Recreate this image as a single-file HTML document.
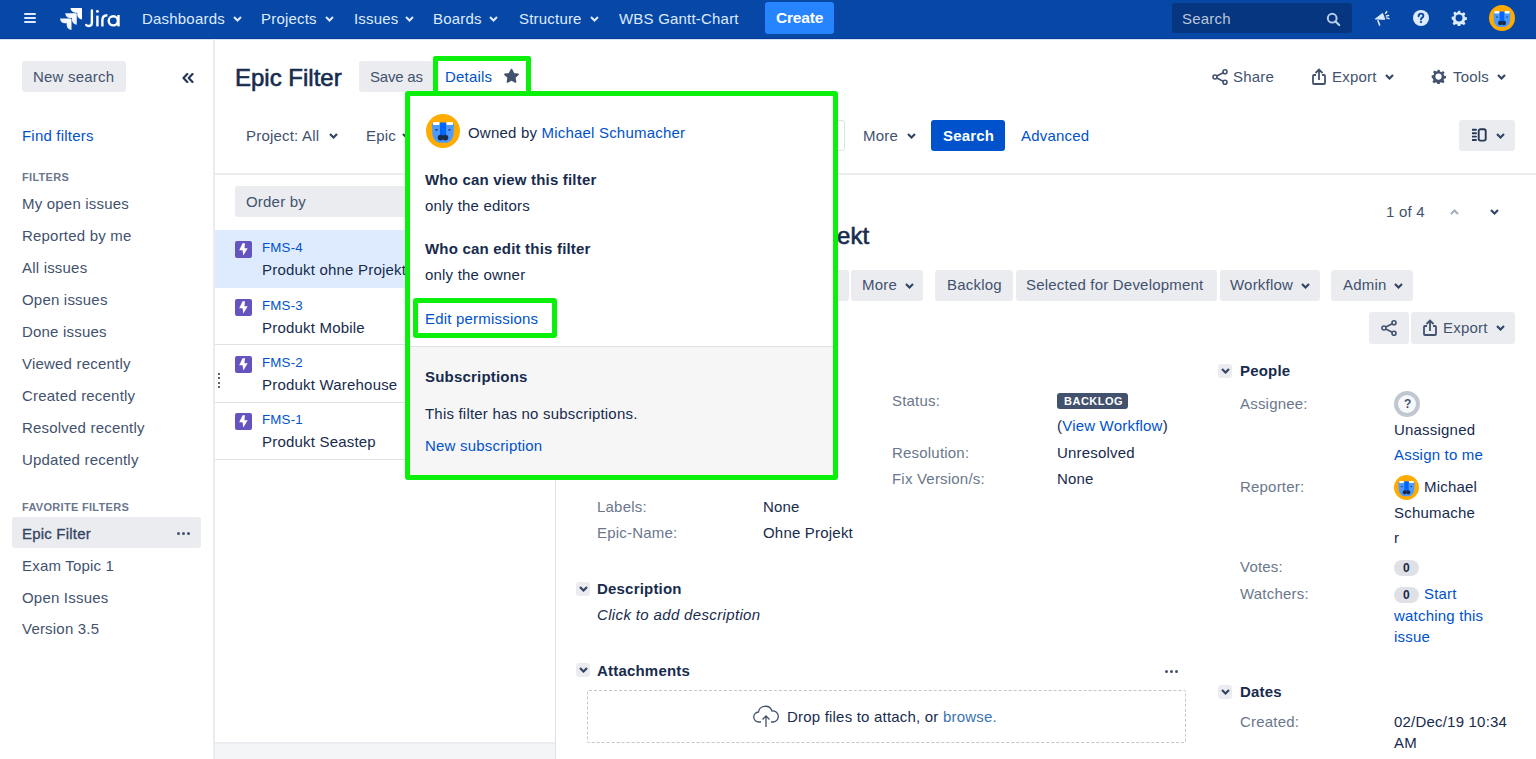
<!DOCTYPE html>
<html><head><meta charset="utf-8">
<style>
*{box-sizing:border-box;margin:0;padding:0}
html,body{width:1536px;height:759px;overflow:hidden;background:#fff;font-family:"Liberation Sans",sans-serif;color:#172B4D}
.a{position:absolute}
.t{position:absolute;white-space:nowrap;font-size:15px;line-height:20px;letter-spacing:0.2px}
.s{color:#42526E}
.lbl{color:#6B778C}
.lnk{color:#0052CC}
.b{font-weight:bold}
.med{-webkit-text-stroke:0.35px currentColor}
.btn{position:absolute;background:#EBECF0;border-radius:3px}
.chev{position:absolute;width:9px;height:6px}
#nav{position:absolute;left:0;top:0;width:1536px;height:39px;background:#0747A6}
#nav .t{color:#DEEBFF;top:9px}
</style></head><body>

<!-- NAV -->
<div id="nav">
  <div class="a" style="left:0;top:38px;width:1536px;height:1px;background:#083C96"></div>
  <div class="a" style="left:24px;top:13px;width:12px;height:2px;background:#DEEBFF;border-radius:1px"></div>
  <div class="a" style="left:24px;top:17px;width:12px;height:2px;background:#DEEBFF;border-radius:1px"></div>
  <div class="a" style="left:24px;top:21px;width:12px;height:2px;background:#DEEBFF;border-radius:1px"></div>
  <svg class="a" style="left:60px;top:8px" width="22" height="22" viewBox="1.5 2 27.2 27.2">
    <defs><linearGradient id="lg" x1="1" y1="0" x2="0" y2="1"><stop offset="0.2" stop-color="#fff"/><stop offset="1" stop-color="#C9D8F5"/></linearGradient></defs>
    <path d="M27.6 2 H14.5 a5.9 5.9 0 0 0 5.9 5.9 h2.4 v2.3 a5.9 5.9 0 0 0 5.9 5.9 V3 a1 1 0 0 0-1-1z" fill="#fff"/>
    <path d="M21.1 8.5 H8 a5.9 5.9 0 0 0 5.9 5.9 h2.4 v2.3 a5.9 5.9 0 0 0 5.9 5.9 V9.5 a1 1 0 0 0-1-1z" fill="url(#lg)"/>
    <path d="M14.6 15 H1.5 a5.9 5.9 0 0 0 5.9 5.9 h2.4 v2.3 a5.9 5.9 0 0 0 5.9 5.9 V16 a1 1 0 0 0-1-1z" fill="url(#lg)"/>
  </svg>
  <svg class="a" style="left:84px;top:8px" width="40" height="22" viewBox="84 8 40 22">
    <path d="M91.9 10.4 V22.6 Q91.9 26 88.8 26 Q87 26 86.2 25" fill="none" stroke="#fff" stroke-width="2.4" stroke-linecap="round"/>
    <path d="M97.4 15.6 V26.4" stroke="#fff" stroke-width="2.4"/>
    <circle cx="97.4" cy="11.4" r="1.45" fill="#fff"/>
    <path d="M102.4 26.4 V20 Q102.4 15.2 107.4 15.2" fill="none" stroke="#fff" stroke-width="2.4"/>
    <circle cx="113.3" cy="20.8" r="4.6" fill="none" stroke="#fff" stroke-width="2.4"/>
    <path d="M118.5 15 V26.4" stroke="#fff" stroke-width="2.4"/>
  </svg>
  <div class="t" style="left:142px">Dashboards</div>
  <div class="t" style="left:261px">Projects</div>
  <div class="t" style="left:354px">Issues</div>
  <div class="t" style="left:433px">Boards</div>
  <div class="t" style="left:519px">Structure</div>
  <div class="t" style="left:619px">WBS Gantt-Chart</div>
  <svg class="chev" style="left:233px;top:15.5px" viewBox="0 0 9 6"><path d="M1 1 L4.5 4.5 L8 1" stroke="#DEEBFF" stroke-width="2" fill="none"/></svg>
  <svg class="chev" style="left:325px;top:15.5px" viewBox="0 0 9 6"><path d="M1 1 L4.5 4.5 L8 1" stroke="#DEEBFF" stroke-width="2" fill="none"/></svg>
  <svg class="chev" style="left:405px;top:15.5px" viewBox="0 0 9 6"><path d="M1 1 L4.5 4.5 L8 1" stroke="#DEEBFF" stroke-width="2" fill="none"/></svg>
  <svg class="chev" style="left:489px;top:15.5px" viewBox="0 0 9 6"><path d="M1 1 L4.5 4.5 L8 1" stroke="#DEEBFF" stroke-width="2" fill="none"/></svg>
  <svg class="chev" style="left:590px;top:15.5px" viewBox="0 0 9 6"><path d="M1 1 L4.5 4.5 L8 1" stroke="#DEEBFF" stroke-width="2" fill="none"/></svg>
  <div class="a" style="left:765px;top:2px;width:69px;height:31.7px;background:#2684FF;border-radius:3px"></div>
  <div class="t b" style="left:776px;top:8px;font-size:15.5px;letter-spacing:-0.2px;color:#fff">Create</div>
  <div class="a" style="left:1172px;top:2.6px;width:180px;height:30.7px;background:#06367F;border-radius:3px"></div>
  <div class="t" style="left:1182px;color:#B9C6DA">Search</div>
</div>

<div class="a" style="left:0;top:39px;width:1536px;height:1px;background:#D5E2F5"></div>
<!-- SIDEBAR -->
<div class="a" style="left:213px;top:39px;width:2px;height:720px;background:#EBECF0"></div>
<div class="btn" style="left:22px;top:61px;width:104px;height:31px"></div>
<div class="t s" style="left:33px;top:67px">New search</div>
<svg class="a" style="left:182px;top:73px" width="12" height="10" viewBox="0 0 12 10"><path d="M5.3 1 L1.5 5 L5.3 9 M10.5 1 L6.7 5 L10.5 9" fill="none" stroke="#253858" stroke-width="2.2" stroke-linejoin="round" stroke-linecap="round"/></svg>
<div class="t lnk" style="left:22px;top:126px">Find filters</div>
<div class="t b lbl" style="left:22px;top:170px;font-size:11px;line-height:14px;letter-spacing:0.3px">FILTERS</div>
<div class="t s" style="left:22px;top:194px">My open issues</div>
<div class="t s" style="left:22px;top:226px">Reported by me</div>
<div class="t s" style="left:22px;top:258px">All issues</div>
<div class="t s" style="left:22px;top:290px">Open issues</div>
<div class="t s" style="left:22px;top:322px">Done issues</div>
<div class="t s" style="left:22px;top:354px">Viewed recently</div>
<div class="t s" style="left:22px;top:386px">Created recently</div>
<div class="t s" style="left:22px;top:418px">Resolved recently</div>
<div class="t s" style="left:22px;top:450px">Updated recently</div>
<div class="t b lbl" style="left:22px;top:500px;font-size:11px;line-height:14px;letter-spacing:0.3px">FAVORITE FILTERS</div>
<div class="btn" style="left:12px;top:517px;width:189px;height:31px"></div>
<div class="t" style="left:22px;top:524px;color:#344563;-webkit-text-stroke:0.3px #344563">Epic Filter</div>
<div class="t s" style="left:22px;top:556px">Exam Topic 1</div>
<div class="t s" style="left:22px;top:588px">Open Issues</div>
<div class="t s" style="left:22px;top:619px">Version 3.5</div>


<!-- MAIN HEADER -->
<div class="t" style="left:235px;top:64px;font-size:24px;line-height:28px;letter-spacing:0;-webkit-text-stroke:0.6px #172B4D">Epic Filter</div>
<div class="btn" style="left:359px;top:61px;width:74px;height:31px"></div>
<div class="t s" style="left:370px;top:67px;letter-spacing:-0.2px">Save as</div>
<div class="t lnk" style="left:445px;top:67px">Details</div>
<svg class="a" style="left:503px;top:68px" width="17" height="16" viewBox="0 0 24 23"><path d="M12 2.2l2.9 6 6.5.9-4.7 4.5 1.1 6.5L12 17l-5.8 3.1 1.1-6.5-4.7-4.5 6.5-.9z" fill="#42526E" stroke="#42526E" stroke-width="2.4" stroke-linejoin="round"/></svg>

<svg class="a" style="left:1212px;top:69px" width="16" height="16" viewBox="0 0 16 16"><circle cx="3" cy="8" r="2" fill="none" stroke="#42526E" stroke-width="1.6"/><circle cx="13" cy="2.8" r="2" fill="none" stroke="#42526E" stroke-width="1.6"/><circle cx="13" cy="13.2" r="2" fill="none" stroke="#42526E" stroke-width="1.6"/><path d="M4.8 7 L11.2 3.8 M4.8 9 L11.2 12.2" stroke="#42526E" stroke-width="1.6"/></svg>
<div class="t s" style="left:1233px;top:67px">Share</div>
<svg class="a" style="left:1312px;top:68px" width="14" height="17" viewBox="0 0 14 17"><path d="M4 7 H2 a1 1 0 0 0 -1 1 V15 a1 1 0 0 0 1 1 H12 a1 1 0 0 0 1 -1 V8 a1 1 0 0 0 -1 -1 H10" fill="none" stroke="#42526E" stroke-width="1.8"/><path d="M7 12 V1.5 M3.5 5 L7 1.5 L10.5 5" fill="none" stroke="#42526E" stroke-width="1.8"/></svg>
<div class="t s" style="left:1332px;top:67px">Export</div>
<svg class="chev" style="left:1385px;top:74px" viewBox="0 0 9 6"><path d="M1 1 L4.5 4.5 L8 1" stroke="#344563" stroke-width="2.2" fill="none"/></svg>
<svg class="a" style="left:1431px;top:69px" width="15" height="15" viewBox="0 0 24 24"><path d="M10.3 1h3.4l.7 3.1a8.3 8.3 0 0 1 2.2.9l2.7-1.7 2.4 2.4-1.7 2.7a8.3 8.3 0 0 1 .9 2.2l3.1.7v3.4l-3.1.7a8.3 8.3 0 0 1-.9 2.2l1.7 2.7-2.4 2.4-2.7-1.7a8.3 8.3 0 0 1-2.2.9l-.7 3.1h-3.4l-.7-3.1a8.3 8.3 0 0 1-2.2-.9l-2.7 1.7-2.4-2.4 1.7-2.7a8.3 8.3 0 0 1-.9-2.2L1 13.7v-3.4l3.1-.7a8.3 8.3 0 0 1 .9-2.2L3.3 4.7l2.4-2.4 2.7 1.7a8.3 8.3 0 0 1 2.2-.9z" fill="#42526E"/><circle cx="12" cy="12" r="5" fill="#fff"/></svg>
<div class="t s" style="left:1453px;top:67px">Tools</div>
<svg class="chev" style="left:1497px;top:74px" viewBox="0 0 9 6"><path d="M1 1 L4.5 4.5 L8 1" stroke="#344563" stroke-width="2.2" fill="none"/></svg>

<!-- FILTER BAR -->
<div class="t s" style="left:246px;top:126px">Project: All</div>
<svg class="chev" style="left:329px;top:133px" viewBox="0 0 9 6"><path d="M1 1 L4.5 4.5 L8 1" stroke="#344563" stroke-width="2.2" fill="none"/></svg>
<div class="t s" style="left:366px;top:126px">Epic</div>
<svg class="chev" style="left:402px;top:133px" viewBox="0 0 9 6"><path d="M1 1 L4.5 4.5 L8 1" stroke="#344563" stroke-width="2.2" fill="none"/></svg>
<div class="a" style="left:640px;top:120px;width:205px;height:31px;border:1px solid #DFE1E6;border-radius:3px"></div>
<div class="t s" style="left:863px;top:126px">More</div>
<svg class="chev" style="left:907px;top:133px" viewBox="0 0 9 6"><path d="M1 1 L4.5 4.5 L8 1" stroke="#344563" stroke-width="2.2" fill="none"/></svg>
<div class="a" style="left:931px;top:120px;width:74px;height:31px;background:#0052CC;border-radius:3px"></div>
<div class="t b" style="left:943px;top:126px;color:#fff">Search</div>
<div class="t lnk" style="left:1021px;top:126px">Advanced</div>
<div class="btn" style="left:1459px;top:120px;width:56px;height:31px"></div>
<div class="a" style="left:215px;top:172.5px;width:1321px;height:2px;background:#EBECF0"></div>

<!-- ISSUE LIST -->
<div class="a" style="left:555px;top:175px;width:1px;height:584px;background:#DFE1E6"></div>
<div class="btn" style="left:235px;top:186px;width:300px;height:31px;background:#EBECF0"></div>
<div class="t s" style="left:246px;top:192px">Order by</div>
<div class="a" style="left:215px;top:230px;width:340px;height:58px;background:#DEEBFF"></div>
<div class="a" style="left:215px;top:344px;width:340px;height:1px;background:#DFE1E6"></div>
<div class="a" style="left:215px;top:402px;width:340px;height:1px;background:#DFE1E6"></div>
<div class="a" style="left:215px;top:459px;width:340px;height:1px;background:#DFE1E6"></div>
<div class="a" style="left:215px;top:742px;width:340px;height:17px;background:#F4F5F7;border-top:2px solid #EBECF0"></div>
<div class="a" style="left:235px;top:241px;width:17px;height:17px;background:#6554C0;border-radius:2px"><svg width="17" height="17" viewBox="0 0 17 17" style="position:absolute;left:0;top:0"><path d="M7.6 2.3 L4.2 9.2 H7.6 L8.3 14.4 L12.7 7.2 H9.4 L10 2.3 Z" fill="#fff"/></svg></div>
<div class="t lnk" style="left:262px;top:240px;font-size:13.3px;line-height:16px">FMS-4</div>
<div class="t" style="left:262px;top:260px">Produkt ohne Projekt</div>
<div class="a" style="left:235px;top:299px;width:17px;height:17px;background:#6554C0;border-radius:2px"><svg width="17" height="17" viewBox="0 0 17 17" style="position:absolute;left:0;top:0"><path d="M7.6 2.3 L4.2 9.2 H7.6 L8.3 14.4 L12.7 7.2 H9.4 L10 2.3 Z" fill="#fff"/></svg></div>
<div class="t lnk" style="left:262px;top:298px;font-size:13.3px;line-height:16px">FMS-3</div>
<div class="t" style="left:262px;top:318px">Produkt Mobile</div>
<div class="a" style="left:235px;top:356px;width:17px;height:17px;background:#6554C0;border-radius:2px"><svg width="17" height="17" viewBox="0 0 17 17" style="position:absolute;left:0;top:0"><path d="M7.6 2.3 L4.2 9.2 H7.6 L8.3 14.4 L12.7 7.2 H9.4 L10 2.3 Z" fill="#fff"/></svg></div>
<div class="t lnk" style="left:262px;top:355px;font-size:13.3px;line-height:16px">FMS-2</div>
<div class="t" style="left:262px;top:375px">Produkt Warehouse</div>
<div class="a" style="left:235px;top:413px;width:17px;height:17px;background:#6554C0;border-radius:2px"><svg width="17" height="17" viewBox="0 0 17 17" style="position:absolute;left:0;top:0"><path d="M7.6 2.3 L4.2 9.2 H7.6 L8.3 14.4 L12.7 7.2 H9.4 L10 2.3 Z" fill="#fff"/></svg></div>
<div class="t lnk" style="left:262px;top:412px;font-size:13.3px;line-height:16px">FMS-1</div>
<div class="t" style="left:262px;top:432px">Produkt Seastep</div>
<div class="a" style="left:217.6px;top:373px;width:2px;height:2px;background:#333;border-radius:1px"></div>
<div class="a" style="left:217.6px;top:377.4px;width:2px;height:2px;background:#333;border-radius:1px"></div>
<div class="a" style="left:217.6px;top:381.7px;width:2px;height:2px;background:#333;border-radius:1px"></div>
<div class="a" style="left:217.6px;top:386px;width:2px;height:2px;background:#333;border-radius:1px"></div>


<!-- ISSUE DETAIL -->
<div class="t s" style="left:1386px;top:202px">1 of 4</div>
<svg class="chev" style="left:1450px;top:209px" viewBox="0 0 9 6"><path d="M1 5 L4.5 1.5 L8 5" stroke="#A5ADBA" stroke-width="2" fill="none"/></svg>
<svg class="chev" style="left:1490px;top:209px" viewBox="0 0 9 6"><path d="M1 1 L4.5 4.5 L8 1" stroke="#344563" stroke-width="2.2" fill="none"/></svg>
<div class="t" style="left:645px;top:222px;font-size:24px;line-height:28px;letter-spacing:0;-webkit-text-stroke:0.6px #172B4D">Produkt ohne Projekt</div>
<div class="btn" style="left:780px;top:270px;width:69px;height:31px"></div>
<div class="btn" style="left:851px;top:270px;width:72px;height:31px"></div>
<div class="t s" style="left:862px;top:275px">More</div>
<svg class="chev" style="left:905px;top:283px" viewBox="0 0 9 6"><path d="M1 1 L4.5 4.5 L8 1" stroke="#344563" stroke-width="2.2" fill="none"/></svg>
<div class="btn" style="left:935px;top:270px;width:78px;height:31px"></div>
<div class="t s" style="left:947px;top:275px">Backlog</div>
<div class="btn" style="left:1016px;top:270px;width:201px;height:31px"></div>
<div class="t s" style="left:1026px;top:275px">Selected for Development</div>
<div class="btn" style="left:1220px;top:270px;width:100px;height:31px"></div>
<div class="t s" style="left:1230px;top:275px">Workflow</div>
<svg class="chev" style="left:1301px;top:283px" viewBox="0 0 9 6"><path d="M1 1 L4.5 4.5 L8 1" stroke="#344563" stroke-width="2.2" fill="none"/></svg>
<div class="btn" style="left:1331px;top:270px;width:82px;height:31px"></div>
<div class="t s" style="left:1343px;top:275px">Admin</div>
<svg class="chev" style="left:1394px;top:283px" viewBox="0 0 9 6"><path d="M1 1 L4.5 4.5 L8 1" stroke="#344563" stroke-width="2.2" fill="none"/></svg>
<div class="btn" style="left:1369px;top:312px;width:40px;height:32px"></div>
<svg class="a" style="left:1381px;top:320px" width="16" height="16" viewBox="0 0 16 16"><circle cx="3" cy="8" r="2" fill="none" stroke="#42526E" stroke-width="1.6"/><circle cx="13" cy="2.8" r="2" fill="none" stroke="#42526E" stroke-width="1.6"/><circle cx="13" cy="13.2" r="2" fill="none" stroke="#42526E" stroke-width="1.6"/><path d="M4.8 7 L11.2 3.8 M4.8 9 L11.2 12.2" stroke="#42526E" stroke-width="1.6"/></svg>
<div class="btn" style="left:1411px;top:312px;width:104px;height:32px"></div>
<svg class="a" style="left:1423px;top:319px" width="14" height="17" viewBox="0 0 14 17"><path d="M4 7 H2 a1 1 0 0 0 -1 1 V15 a1 1 0 0 0 1 1 H12 a1 1 0 0 0 1 -1 V8 a1 1 0 0 0 -1 -1 H10" fill="none" stroke="#42526E" stroke-width="1.8"/><path d="M7 12 V1.5 M3.5 5 L7 1.5 L10.5 5" fill="none" stroke="#42526E" stroke-width="1.8"/></svg>
<div class="t s" style="left:1443px;top:318px">Export</div>
<svg class="chev" style="left:1496px;top:325px" viewBox="0 0 9 6"><path d="M1 1 L4.5 4.5 L8 1" stroke="#344563" stroke-width="2.2" fill="none"/></svg>

<div class="t lbl" style="left:892px;top:391px">Status:</div>
<div class="a" style="left:1057px;top:393px;width:71px;height:16px;background:#42526E;border-radius:3px"></div>
<div class="t b" style="left:1064px;top:394px;font-size:11px;line-height:14px;color:#fff;letter-spacing:0.5px">BACKLOG</div>
<div class="t" style="left:1057px;top:416px">(<span class="lnk">View Workflow</span>)</div>
<div class="t lbl" style="left:892px;top:443px">Resolution:</div>
<div class="t" style="left:1057px;top:443px">Unresolved</div>
<div class="t lbl" style="left:892px;top:469px">Fix Version/s:</div>
<div class="t" style="left:1057px;top:469px">None</div>
<div class="t lbl" style="left:597px;top:497px">Labels:</div>
<div class="t" style="left:763px;top:497px">None</div>
<div class="t lbl" style="left:597px;top:523px">Epic-Name:</div>
<div class="t" style="left:763px;top:523px">Ohne Projekt</div>
<div class="btn" style="left:576px;top:582px;width:14px;height:14px;border-radius:3px"></div><svg class="chev" style="left:579px;top:586px" viewBox="0 0 9 6"><path d="M1 1 L4.5 4.5 L8 1" stroke="#344563" stroke-width="2.2" fill="none"/></svg>
<div class="t b" style="left:597px;top:579px">Description</div>
<div class="t" style="left:597px;top:605px;font-style:italic;letter-spacing:0.35px">Click to add description</div>
<div class="btn" style="left:576px;top:663px;width:14px;height:14px;border-radius:3px"></div><svg class="chev" style="left:579px;top:667px" viewBox="0 0 9 6"><path d="M1 1 L4.5 4.5 L8 1" stroke="#344563" stroke-width="2.2" fill="none"/></svg>
<div class="t b" style="left:597px;top:661px">Attachments</div>
<div class="a" style="left:1165px;top:670px;width:3px;height:3px;background:#42526E;border-radius:2px"></div>
<div class="a" style="left:1170px;top:670px;width:3px;height:3px;background:#42526E;border-radius:2px"></div>
<div class="a" style="left:1175px;top:670px;width:3px;height:3px;background:#42526E;border-radius:2px"></div>
<div class="a" style="left:587px;top:690px;width:599px;height:53px;border:1px dashed #C1C7D0;border-radius:2px"></div>
<svg class="a" style="left:753px;top:705px" width="27" height="23" viewBox="0 0 27 23"><path d="M8 17 H6 a5 5 0 0 1 -0.5 -10 a7 7 0 0 1 13.5 -1 a5.5 5.5 0 0 1 1.5 11 H18" fill="none" stroke="#42526E" stroke-width="1.3"/><path d="M13 22 V11 M9.5 14.5 L13 11 L16.5 14.5" fill="none" stroke="#42526E" stroke-width="1.3"/></svg>
<div class="t" style="left:787px;top:707px">Drop files to attach, or <span style="color:#3B73AF">browse.</span></div>

<div class="btn" style="left:1218px;top:364px;width:14px;height:14px;border-radius:3px"></div><svg class="chev" style="left:1221px;top:368px" viewBox="0 0 9 6"><path d="M1 1 L4.5 4.5 L8 1" stroke="#344563" stroke-width="2.2" fill="none"/></svg>
<div class="t b" style="left:1240px;top:361px">People</div>
<div class="t lbl" style="left:1240px;top:394px">Assignee:</div>
<div class="a" style="left:1394px;top:391px;width:26px;height:26px;border-radius:50%;background:#C1C7D0"></div>
<div class="a" style="left:1398px;top:395px;width:18px;height:18px;border-radius:50%;background:#F7F8F9"></div>
<div class="t b" style="left:1404px;top:397px;font-size:12px;line-height:14px;color:#42526E">?</div>
<div class="t" style="left:1394px;top:420px">Unassigned</div>
<div class="t lnk" style="left:1394px;top:445px">Assign to me</div>
<div class="t lbl" style="left:1240px;top:477px">Reporter:</div>
<div class="t" style="left:1424px;top:477px">Michael</div>
<div class="t" style="left:1394px;top:503px">Schumache</div>
<div class="t" style="left:1394px;top:528px">r</div>
<div class="t lbl" style="left:1240px;top:557px">Votes:</div>
<div class="a" style="left:1394px;top:560px;width:25px;height:16px;border-radius:8px;background:#DFE1E6"></div>
<div class="t b" style="left:1403px;top:561px;font-size:12px;line-height:14px">0</div>
<div class="t lbl" style="left:1240px;top:584px">Watchers:</div>
<div class="a" style="left:1394px;top:587px;width:25px;height:16px;border-radius:8px;background:#DFE1E6"></div>
<div class="t b" style="left:1403px;top:588px;font-size:12px;line-height:14px">0</div>
<div class="t lnk" style="left:1424px;top:584px">Start</div>
<div class="t lnk" style="left:1394px;top:606px">watching this</div>
<div class="t lnk" style="left:1394px;top:627px">issue</div>
<div class="btn" style="left:1218px;top:685px;width:14px;height:14px;border-radius:3px"></div><svg class="chev" style="left:1221px;top:689px" viewBox="0 0 9 6"><path d="M1 1 L4.5 4.5 L8 1" stroke="#344563" stroke-width="2.2" fill="none"/></svg>
<div class="t b" style="left:1240px;top:682px">Dates</div>
<div class="t lbl" style="left:1240px;top:712px">Created:</div>
<div class="t" style="left:1394px;top:712px">02/Dec/19 10:34</div>
<div class="t" style="left:1394px;top:733px">AM</div>



<!-- NAV RIGHT ICONS -->
<svg class="a" style="left:1326px;top:12px" width="15" height="15" viewBox="0 0 15 15"><circle cx="6.2" cy="6.2" r="4.4" fill="none" stroke="#B9CDEB" stroke-width="2"/><path d="M9.4 9.4 L13.2 13" stroke="#B9CDEB" stroke-width="2.2" stroke-linecap="round"/></svg>
<svg class="a" style="left:1370px;top:6px" width="25" height="24" viewBox="1370 6 25 24"><path d="M1375.2 19 L1382.6 13.3 L1384.9 19.4 Z" fill="#DEEBFF" stroke="#DEEBFF" stroke-width="0.8" stroke-linejoin="round"/><path d="M1378 20.8 L1379.6 25" stroke="#DEEBFF" stroke-width="1.6" stroke-linecap="round"/><path d="M1385.6 13.3 L1386.8 11.6 M1386.3 15.9 L1388.6 15.5 M1386.6 17.9 L1389 18.6" stroke="#DEEBFF" stroke-width="1.5" stroke-linecap="round"/></svg>
<svg class="a" style="left:1413px;top:10px" width="16" height="16" viewBox="0 0 16 16"><circle cx="8" cy="8" r="8" fill="#DEEBFF"/><path d="M5.6 6.2 Q5.6 3.6 8 3.6 Q10.4 3.6 10.4 5.8 Q10.4 7.2 8.9 7.9 Q8 8.4 8 9.6" fill="none" stroke="#0747A6" stroke-width="1.9" stroke-linecap="round"/><circle cx="8" cy="12.1" r="1.1" fill="#0747A6"/></svg>
<svg class="a" style="left:1451px;top:10px" width="16" height="16" viewBox="0 0 24 24"><path d="M10.3 1h3.4l.7 3.1a8.3 8.3 0 0 1 2.2.9l2.7-1.7 2.4 2.4-1.7 2.7a8.3 8.3 0 0 1 .9 2.2l3.1.7v3.4l-3.1.7a8.3 8.3 0 0 1-.9 2.2l1.7 2.7-2.4 2.4-2.7-1.7a8.3 8.3 0 0 1-2.2.9l-.7 3.1h-3.4l-.7-3.1a8.3 8.3 0 0 1-2.2-.9l-2.7 1.7-2.4-2.4 1.7-2.7a8.3 8.3 0 0 1-.9-2.2L1 13.7v-3.4l3.1-.7a8.3 8.3 0 0 1 .9-2.2L3.3 4.7l2.4-2.4 2.7 1.7a8.3 8.3 0 0 1 2.2-.9z" fill="#DEEBFF"/><circle cx="12" cy="12" r="5.2" fill="#0747A6"/></svg>
<svg class="a" style="left:1489px;top:5px" width="26" height="26" viewBox="0 0 34 34">
  <circle cx="17" cy="17" r="17" fill="#FFAB00"/>
  <path d="M6 9.5 H28 L27.6 20 Q27 26.5 21 28.8 H13 Q7 26.5 6.4 20 Z" fill="#4C9AFF"/>
  <rect x="7" y="8" width="6.5" height="3" rx="1" fill="#fff"/><rect x="20.5" y="8" width="6.5" height="3" rx="1" fill="#fff"/>
  <rect x="14" y="8.5" width="6" height="14" fill="#0065FF"/>
  <circle cx="14.6" cy="23.6" r="2.9" fill="#172B4D"/><circle cx="19.4" cy="23.6" r="2.9" fill="#172B4D"/>
  <rect x="9.5" y="15" width="2" height="1.6" fill="#1E3A6E"/><rect x="22.5" y="15" width="2" height="1.6" fill="#1E3A6E"/>
</svg>
<svg class="a" style="left:1394px;top:475px" width="25" height="25" viewBox="0 0 34 34">
  <circle cx="17" cy="17" r="17" fill="#FFAB00"/>
  <path d="M6 9.5 H28 L27.6 20 Q27 26.5 21 28.8 H13 Q7 26.5 6.4 20 Z" fill="#4C9AFF"/>
  <rect x="7" y="8" width="6.5" height="3" rx="1" fill="#fff"/><rect x="20.5" y="8" width="6.5" height="3" rx="1" fill="#fff"/>
  <rect x="14" y="8.5" width="6" height="14" fill="#0065FF"/>
  <circle cx="14.6" cy="23.6" r="2.9" fill="#172B4D"/><circle cx="19.4" cy="23.6" r="2.9" fill="#172B4D"/>
  <rect x="9.5" y="15" width="2" height="1.6" fill="#1E3A6E"/><rect x="22.5" y="15" width="2" height="1.6" fill="#1E3A6E"/>
</svg>
<!-- view toggle icon -->
<svg class="a" style="left:1472px;top:128px" width="16" height="14" viewBox="0 0 16 14"><path d="M0.5 1.8 H4 M0.5 5.2 H4 M0.5 8.6 H4 M0.5 12 H4" stroke="#253858" stroke-width="1.9" stroke-linecap="round"/><rect x="6.7" y="1.2" width="7" height="11.4" rx="1.8" fill="none" stroke="#253858" stroke-width="1.9"/></svg>
<svg class="chev" style="left:1496px;top:133px" viewBox="0 0 9 6"><path d="M1 1 L4.5 4.5 L8 1" stroke="#344563" stroke-width="2.2" fill="none"/></svg>
<!-- sidebar dots -->
<div class="a" style="left:176.5px;top:531.5px;width:3px;height:3px;background:#42526E;border-radius:2px"></div>
<div class="a" style="left:181.5px;top:531.5px;width:3px;height:3px;background:#42526E;border-radius:2px"></div>
<div class="a" style="left:186.5px;top:531.5px;width:3px;height:3px;background:#42526E;border-radius:2px"></div>

<!-- POPUP -->
<div class="a" style="left:405px;top:91px;width:433px;height:389px;background:#fff;border:5px solid #0AF00A;border-radius:3px"></div>
<div class="a" style="left:410px;top:346px;width:423px;height:1px;background:#DFE1E6"></div>
<div class="a" style="left:410px;top:347px;width:423px;height:128px;background:#F6F6F7"></div>
<div class="a" style="left:433px;top:56px;width:98px;height:40px;border:5px solid #0AF00A;border-bottom:none;border-radius:3px 3px 0 0"></div>
<svg class="a" style="left:426px;top:114px" width="34" height="34" viewBox="0 0 34 34">
  <circle cx="17" cy="17" r="17" fill="#FFAB00"/>
  <path d="M6 9.5 H28 L27.6 20 Q27 26.5 21 28.8 H13 Q7 26.5 6.4 20 Z" fill="#4C9AFF"/>
  <rect x="7" y="8" width="6.5" height="3" rx="1" fill="#fff"/><rect x="20.5" y="8" width="6.5" height="3" rx="1" fill="#fff"/>
  <rect x="14" y="8.5" width="6" height="14" fill="#0065FF"/>
  <circle cx="14.6" cy="23.6" r="2.9" fill="#172B4D"/><circle cx="19.4" cy="23.6" r="2.9" fill="#172B4D"/>
  <rect x="9.5" y="15" width="2" height="1.6" fill="#1E3A6E"/><rect x="22.5" y="15" width="2" height="1.6" fill="#1E3A6E"/>
</svg>
<div class="t" style="left:468px;top:123px">Owned by <span class="lnk">Michael Schumacher</span></div>
<div class="t b" style="left:425px;top:170px">Who can view this filter</div>
<div class="t" style="left:425px;top:196px">only the editors</div>
<div class="t b" style="left:425px;top:239px">Who can edit this filter</div>
<div class="t" style="left:425px;top:265px">only the owner</div>
<div class="t lnk" style="left:425px;top:309px">Edit permissions</div>
<div class="a" style="left:413px;top:298px;width:144px;height:40px;border:5px solid #0AF00A;border-radius:3px"></div>
<div class="t b" style="left:425px;top:367px">Subscriptions</div>
<div class="t" style="left:425px;top:404px">This filter has no subscriptions.</div>
<div class="t lnk" style="left:425px;top:436px">New subscription</div>

</body></html>
